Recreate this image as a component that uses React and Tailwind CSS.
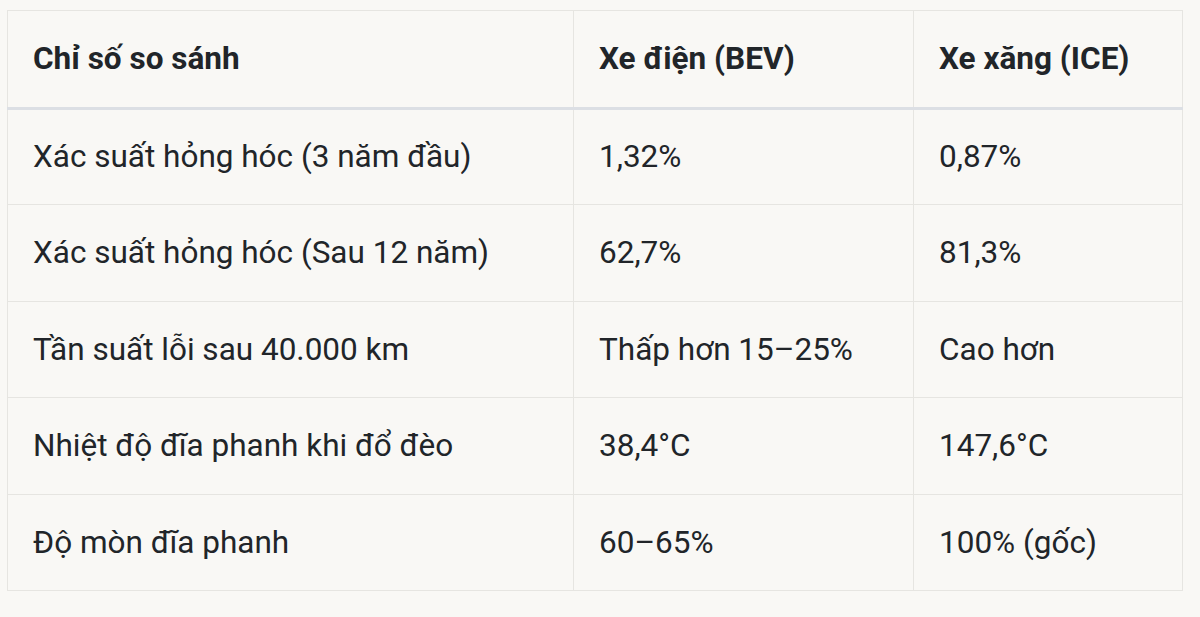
export default function App() {
  const rows = [
    ["Xác suất hỏng hóc (3 năm đầu)", "1,32%", "0,87%", "h-[96px]"],
    ["Xác suất hỏng hóc (Sau 12 năm)", "62,7%", "81,3%", "h-[97px]"],
    ["Tần suất lỗi sau 40.000 km", "Thấp hơn 15–25%", "Cao hơn", "h-[96px]"],
    ["Nhiệt độ đĩa phanh khi đổ đèo", "38,4°C", "147,6°C", "h-[97px]"],
    ["Độ mòn đĩa phanh", "60–65%", "100% (gốc)", "h-[96px]"],
  ];
  return (
    <div
      className="w-[1200px] h-[617px] bg-[#f9f8f5] pt-[10px] pl-[7px] text-[#212529]"
      style={{ fontFamily: "Roboto, 'Noto Sans', sans-serif" }}
    >
      <table className="border-collapse border border-[#e6e5e1] text-[31.5px] leading-[38px]">
        <colgroup>
          <col className="w-[566px]" />
          <col className="w-[340px]" />
          <col className="w-[269px]" />
        </colgroup>
        <thead>
          <tr className="h-[98px] border-b-[3px] border-[#dcdfe4]">
            <th className="text-left font-bold px-[25px] border-r border-[#e6e5e1]">Chỉ số so sánh</th>
            <th className="text-left font-bold px-[25px] border-r border-[#e6e5e1]">Xe điện (BEV)</th>
            <th className="text-left font-bold px-[25px]">Xe xăng (ICE)</th>
          </tr>
        </thead>
        <tbody>
          {rows.map((r, i) => (
            <tr key={i} className={`${r[3]} border-b border-[#e6e5e1]`}>
              <td className="px-[25px] border-r border-[#e6e5e1]">{r[0]}</td>
              <td className="px-[25px] border-r border-[#e6e5e1]">{r[1]}</td>
              <td className="px-[25px]">{r[2]}</td>
            </tr>
          ))}
        </tbody>
      </table>
    </div>
  );
}
